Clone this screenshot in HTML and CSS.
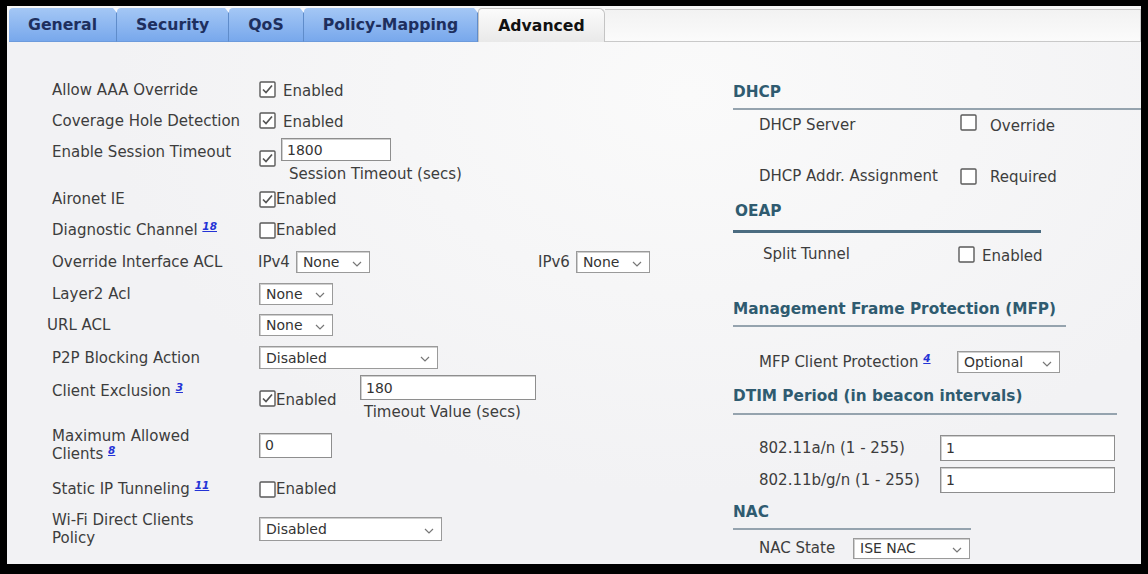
FILE: index.html
```html
<!DOCTYPE html>
<html lang="en">
<head>
  <meta charset="UTF-8" />
  <title>WLAN Edit - Advanced</title>
  <link rel="stylesheet" href="styles.css">
</head>
<body>
<div class="frame">

  <div class="tabs">
    <a class="tab">General</a>
    <a class="tab">Security</a>
    <a class="tab">QoS</a>
    <a class="tab">Policy-Mapping</a>
    <a class="tab active">Advanced</a>
    <div class="tab-fill"></div>
  </div>

  <div class="content">

    <!-- left column -->
    <div class="form-left">
      <div class="lbl">Allow AAA Override</div>
      <div class="ctl"><svg class="cb" viewBox="0 0 17 17"><rect x="1" y="1" width="15" height="15" rx="1"/><path d="M4 8.5l3 3 6-7"/></svg><span class="opt">Enabled</span></div>

      <div class="lbl">Coverage Hole Detection</div>
      <div class="ctl"><svg class="cb" viewBox="0 0 17 17"><rect x="1" y="1" width="15" height="15" rx="1"/><path d="M4 8.5l3 3 6-7"/></svg><span class="opt">Enabled</span></div>

      <div class="lbl top">Enable Session Timeout</div>
      <div class="ctl">
        <svg class="cb cb-session" viewBox="0 0 17 17"><rect x="1" y="1" width="15" height="15" rx="1"/><path d="M4 8.5l3 3 6-7"/></svg>
        <div class="stack">
          <div class="input w-session">1800</div>
          <div class="hint hint-session">Session Timeout (secs)</div>
        </div>
      </div>

      <div class="lbl">Aironet IE</div>
      <div class="ctl"><svg class="cb" viewBox="0 0 17 17"><rect x="1" y="1" width="15" height="15" rx="1"/><path d="M4 8.5l3 3 6-7"/></svg><span>Enabled</span></div>

      <div class="lbl">Diagnostic Channel <a class="ref">18</a></div>
      <div class="ctl"><svg class="cb" viewBox="0 0 17 17"><rect x="1" y="1" width="15" height="15" rx="1"/></svg><span>Enabled</span></div>

      <div class="lbl">Override Interface ACL</div>
      <div class="ctl ctl-acl">
        <div class="acl-group">IPv4 <div class="select w-none"><span>None</span><svg class="chev" viewBox="0 0 10 6"><path d="M1 1l4 4 4-4"/></svg></div></div>
        <div class="acl-group">IPv6 <div class="select w-none"><span>None</span><svg class="chev" viewBox="0 0 10 6"><path d="M1 1l4 4 4-4"/></svg></div></div>
      </div>

      <div class="lbl">Layer2 Acl</div>
      <div class="ctl"><div class="select w-none"><span>None</span><svg class="chev" viewBox="0 0 10 6"><path d="M1 1l4 4 4-4"/></svg></div></div>

      <div class="lbl lbl-out">URL ACL</div>
      <div class="ctl"><div class="select w-none"><span>None</span><svg class="chev" viewBox="0 0 10 6"><path d="M1 1l4 4 4-4"/></svg></div></div>

      <div class="lbl">P2P Blocking Action</div>
      <div class="ctl"><div class="select w-p2p"><span>Disabled</span><svg class="chev" viewBox="0 0 10 6"><path d="M1 1l4 4 4-4"/></svg></div></div>

      <div class="lbl top top-excl">Client Exclusion <a class="ref">3</a></div>
      <div class="ctl ctl-excl">
        <div class="excl-check"><svg class="cb" viewBox="0 0 17 17"><rect x="1" y="1" width="15" height="15" rx="1"/><path d="M4 8.5l3 3 6-7"/></svg><span>Enabled</span></div>
        <div class="stack">
          <div class="input w-excl">180</div>
          <div class="hint">Timeout Value (secs)</div>
        </div>
      </div>

      <div class="lbl">Maximum Allowed<br>Clients <a class="ref">8</a></div>
      <div class="ctl"><div class="input w-max">0</div></div>

      <div class="lbl">Static IP Tunneling <a class="ref">11</a></div>
      <div class="ctl"><svg class="cb" viewBox="0 0 17 17"><rect x="1" y="1" width="15" height="15" rx="1"/></svg><span>Enabled</span></div>

      <div class="lbl">Wi-Fi Direct Clients<br>Policy</div>
      <div class="ctl"><div class="select w-wifi"><span>Disabled</span><svg class="chev" viewBox="0 0 10 6"><path d="M1 1l4 4 4-4"/></svg></div></div>
    </div>

    <!-- right column -->
    <div class="form-right">
      <div class="sec-head sec-dhcp">DHCP</div>
      <div class="row row-dhcp1">
        <div class="rlbl w-201">DHCP Server</div>
        <svg class="cb cb-up" viewBox="0 0 17 17"><rect x="1" y="1" width="15" height="15" rx="1"/></svg><span class="opt-wide">Override</span>
      </div>
      <div class="row row-dhcp2">
        <div class="rlbl w-201">DHCP Addr. Assignment</div>
        <svg class="cb" viewBox="0 0 17 17"><rect x="1" y="1" width="15" height="15" rx="1"/></svg><span class="opt-wide">Required</span>
      </div>

      <div class="sec-head sec-oeap">OEAP</div>
      <div class="row row-split">
        <div class="rlbl w-195">Split Tunnel</div>
        <svg class="cb" viewBox="0 0 17 17"><rect x="1" y="1" width="15" height="15" rx="1"/></svg><span class="opt">Enabled</span>
      </div>

      <div class="sec-head sec-mfp">Management Frame Protection (MFP)</div>
      <div class="row row-mfp">
        <div class="rlbl w-198">MFP Client Protection <a class="ref">4</a></div>
        <div class="select w-optional"><span>Optional</span><svg class="chev" viewBox="0 0 10 6"><path d="M1 1l4 4 4-4"/></svg></div>
      </div>

      <div class="sec-head sec-dtim">DTIM Period (in beacon intervals)</div>
      <div class="row row-dtim1">
        <div class="rlbl w-181">802.11a/n (1 - 255)</div>
        <div class="input w-dtim">1</div>
      </div>
      <div class="row row-dtim2">
        <div class="rlbl w-181">802.11b/g/n (1 - 255)</div>
        <div class="input w-dtim">1</div>
      </div>

      <div class="sec-head sec-nac">NAC</div>
      <div class="row row-nac">
        <div class="rlbl w-94">NAC State</div>
        <div class="select w-nac"><span>ISE NAC</span><svg class="chev" viewBox="0 0 10 6"><path d="M1 1l4 4 4-4"/></svg></div>
      </div>
    </div>

  </div>
</div>
</body>
</html>
```

FILE: styles.css
```css
html, body { margin: 0; height: 100%; }
body {
  background: #000;
  font-family: "DejaVu Sans", Verdana, sans-serif;
  font-size: 15px;
  color: #3d3d3d;
}

.frame {
  position: absolute; /* the photographed window, inset in its black frame */
  left: 7px; top: 6px; right: 7px; bottom: 10px;
  background: #f3f3f5;
  display: flex; flex-direction: column;
}

/* tab strip */
.tabs {
  display: flex; height: 34px; padding: 2px 0 0 2px;
  background: #f6f6f6;
}
.tab {
  position: relative;
  display: flex; align-items: center;
  padding: 0 19px;
  font-size: 15.7px;
  font-weight: bold; color: #1e2f5e;
  background: linear-gradient(#a4c7f5, #78a8ec);
  border-right: 1px solid #5f8cca;
  border-top-left-radius: 4px;
  border-bottom: 1px solid #6d9bdc;
}
.tab::after {
  content: ""; position: absolute; top: 0; right: -5px;
  border-left: 4px solid transparent; border-right: 4px solid transparent;
  border-top: 5px solid #f4f7fc;
}
.tab.active {
  color: #111;
  background: linear-gradient(#fbfbfb, #e9e9e9);
  border: 1px solid #c4c4c4; border-bottom: none;
  border-top-right-radius: 6px;
}
.tab.active::after { display: none; }
.tab-fill {
  flex: 1;
  margin-top: 1px;
  background: linear-gradient(#f2f2f2, #fbfbfb);
  border: 1px solid #c9c9c9; border-left: none;
}

.content {
  flex: 1;
  display: flex;
  padding: 32px 0 0 45px;
  background: radial-gradient(ellipse at 60% 10%, #fafafa, #f2f2f4 60%);
}

/* left form */
.form-left {
  width: 681px;
  display: grid;
  grid-template-columns: 207px 1fr;
  grid-template-rows: 31px 31px 48px 30px 32px 32px 31px 32px 33px 48px 46px 42px 38px;
  align-items: center;
}
.lbl { line-height: 18px; }
.lbl.top { align-self: start; padding-top: 7px; }
.lbl.top-excl { padding-top: 8px; }
.lbl-out { margin-left: -5px; }
.ctl { display: flex; align-items: center; height: 100%; }

.cb { width: 17px; height: 17px; flex: none; }
.cb rect { fill: #fff; stroke: #5a5a5a; stroke-width: 1.4; }
.cb path { fill: none; stroke: #555; stroke-width: 1.7; }
.cb-up { margin-top: -6px; }
.cb-session { margin-top: -3px; }
.opt { margin-left: 7px; margin-top: 3px; }
.opt-wide { margin-left: 13px; margin-top: 2px; }

.stack { display: flex; flex-direction: column; align-self: flex-start; }
.hint { margin: 3px 0 0 8px; line-height: 18px; }
.hint-session { margin: 4px 0 0 13px; }

.input, .select {
  box-sizing: border-box;
  background: #fff;
  border: 1px solid #8e8e8e;
  box-shadow: inset 1px 1px 0 #cfcfcf;
  display: flex; align-items: center;
  padding: 0 5px;
  font-size: 14px; color: #333;
}
.select { justify-content: space-between; padding: 0 7px 0 6px; border-color: #9a9a9a; }
.chev { width: 10px; height: 6px; margin-top: 3px; }
.chev path { fill: none; stroke: #777; stroke-width: 1.2; }

.w-session { width: 110px; height: 23px; margin: 2px 0 0 5px; }
.w-none { width: 74px; height: 22px; }
.w-p2p { width: 179px; height: 23px; }
.w-excl { width: 176px; height: 25px; }
.w-max { width: 73px; height: 25px; }
.w-wifi { width: 183px; height: 24px; }

.ctl-acl { margin-left: -1px; }
.acl-group { display: flex; align-items: center; gap: 6px; width: 280px; }
.ctl-excl { align-items: flex-start; }
.excl-check { display: flex; align-items: center; margin-top: 14px; width: 101px; }
.excl-check span { margin-top: 3px; }
.ctl-excl .stack { margin-top: 1px; }
.ctl-excl .hint { margin-left: 4px; }

.ref {
  font-size: 10.5px; font-weight: bold; font-style: italic;
  color: #2433d6; text-decoration: underline;
  vertical-align: 5px; line-height: 0;
}

/* right form */
.form-right { flex: 1; display: flex; flex-direction: column; }
.sec-head {
  font-weight: bold; font-size: 15.3px; line-height: 18px;
  color: #2f5b70;
  border-bottom: 2px solid #95a3ae;
}
.sec-dhcp { margin-top: 9px; padding-bottom: 7px; }
.sec-oeap { margin-top: 13px; padding: 0 0 10px 2px; width: 306px; border-bottom: 3px solid #4b6c81; }
.sec-mfp { margin-top: 33px; padding-bottom: 7px; width: 333px; }
.sec-dtim { margin-top: 12px; padding-bottom: 8px; width: 384px; }
.sec-nac { margin-top: 10px; padding-bottom: 7px; width: 238px; }

.row { display: flex; align-items: center; height: 26px; padding-left: 26px; }
.rlbl { flex: none; }
.row-dhcp1 { margin-top: 2px; }
.row-dhcp2 { margin-top: 25px; }
.row-split { margin-top: 8px; padding-left: 30px; }
.row-mfp { margin-top: 22px; }
.row-dtim1 { margin-top: 20px; }
.row-dtim2 { margin-top: 6px; }
.row-nac { margin-top: 7px; height: 22px; }

.w-201 { width: 201px; }
.w-195 { width: 195px; }
.w-198 { width: 198px; }
.w-181 { width: 181px; }
.w-94 { width: 94px; }

.w-optional { width: 103px; height: 22px; }
.w-dtim { width: 175px; height: 26px; }
.w-nac { width: 117px; height: 21px; }
```
